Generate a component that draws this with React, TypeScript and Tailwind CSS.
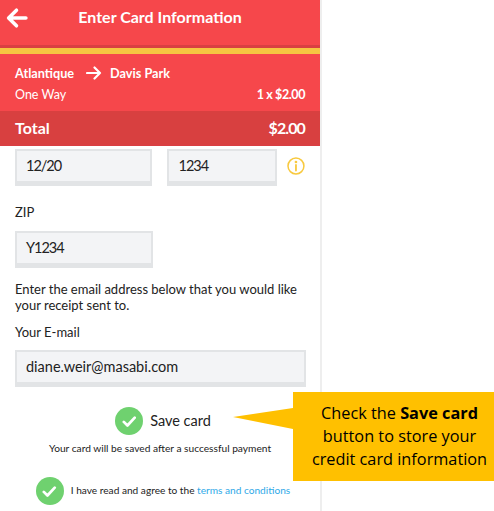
const font = { fontFamily: '"Lato", "Noto Sans", sans-serif' };

function Check({ size }: { size: number }) {
  return (
    <div className="flex shrink-0 items-center justify-center rounded-full bg-[#6fd16f]" style={{ width: size, height: size }}>
      <svg width={size * 0.52} height={size * 0.52} viewBox="0 0 24 24" fill="none" stroke="white" strokeWidth="4.5" strokeLinecap="round" strokeLinejoin="round">
        <path d="M3 13l6 6L21 6" />
      </svg>
    </div>
  );
}

function Field({ value, className }: { value: string; className: string }) {
  return (
    <div className={`flex h-[37px] items-center border-2 border-b-[5px] border-[#e2e4e6] bg-[#f3f4f6] pl-[9px] text-[#222] ${className}`}>
      {value}
    </div>
  );
}

export default function App() {
  return (
    <div className="relative h-[511px] w-[494px] overflow-hidden bg-white" style={font}>
      <div className="h-[511px] w-[322px] border-r-2 border-[#eeeeee]">
        <div className="relative flex h-[48px] items-start justify-center border-b-[3px] border-[#d93f42] bg-[#f6474b] pt-[5px] text-[16px] font-bold text-white">
          <svg className="absolute left-[6px] top-[7px]" width="22" height="22" viewBox="0 0 21 21" fill="none" stroke="white" strokeWidth="3.4" strokeLinecap="round" strokeLinejoin="round">
            <path d="M19 10.5H3M10 3l-7.5 7.5L10 18" />
          </svg>
          <span>Enter Card Information</span>
        </div>
        <div className="h-[6px] bg-[#f6c542]" />
        <div className="h-[57px] bg-[#f6474b] px-[15px] pt-[9px] text-white">
          <div className="flex items-center text-[12.7px] font-bold leading-[20px]">
            <span>Atlantique</span>
            <svg className="ml-[12px] mr-[8px]" width="16" height="14" viewBox="0 0 16 14" fill="none" stroke="white" strokeWidth="2.2" strokeLinecap="round" strokeLinejoin="round">
              <path d="M1 7h13M8.5 1.5L14 7l-5.5 5.5" />
            </svg>
            <span>Davis Park</span>
          </div>
          <div className="mt-[1px] flex justify-between text-[12.5px] leading-[21px]">
            <span>One Way</span>
            <span className="text-[12.5px] font-bold tracking-[-0.4px]">1 x $2.00</span>
          </div>
        </div>
        <div className="flex h-[35px] items-center justify-between border-b-2 border-[#d93f42] bg-[#d84040] px-[15px] text-[16px] font-bold text-white">
          <span>Total</span>
          <span className="tracking-[-0.9px]">$2.00</span>
        </div>
        <div className="px-[15px]">
          <div className="mt-[3px] flex items-center">
            <Field value="12/20" className="w-[138px] text-[14.5px] tracking-[-1px]" />
            <Field value="1234" className="ml-[15px] w-[110px] text-[14.5px] tracking-[-1px]" />
            <svg className="ml-[10px] -mt-[3px]" width="18" height="18" viewBox="0 0 18 18" fill="none" stroke="#f8c93e" strokeWidth="1.5" strokeLinecap="round">
              <circle cx="9" cy="9" r="8" />
              <path d="M9 8v5.5" strokeWidth="1.8" />
              <circle cx="9" cy="5" r="0.6" />
            </svg>
          </div>
          <div className="mt-[16px] text-[13px] leading-[20px] text-[#222]">ZIP</div>
          <Field value="Y1234" className="mt-[9px] w-[138px] text-[14.5px] tracking-[-1px]" />
          <p className="mt-[13px] text-[13px] leading-[16px] text-[#222]">Enter the email address below that you would like your receipt sent to.</p>
          <div className="mt-[11px] text-[13px] leading-[16px] text-[#222]">Your E-mail</div>
          <Field value="diane.weir@masabi.com" className="mt-[10px] w-[291px] text-[14.5px]" />
          <div className="mt-[20px] flex items-center justify-center pl-[6px]">
            <Check size={28} />
            <span className="ml-[7px] text-[14.5px] text-[#222]">Save card</span>
          </div>
          <div className="mt-[6px] text-center text-[10.2px] leading-[15px] text-[#222]">Your card will be saved after a successful payment</div>
          <div className="mt-[21px] flex items-center justify-center pl-[6px]">
            <Check size={28} />
            <span className="ml-[7px] text-[10.15px] text-[#222]">
              I have read and agree to the <span className="text-[#2fa9e8]">terms and conditions</span>
            </span>
          </div>
        </div>
      </div>
      <svg className="absolute left-[233px] top-[392px]" width="61" height="60" viewBox="0 0 61 60">
        <polygon points="0,25 60,16 60,37" fill="#ffc000" />
      </svg>
      <div
        className="absolute left-[293px] top-[392px] flex h-[89px] w-[201px] items-center justify-center bg-[#ffc000] pl-[12px] text-center text-[16.3px] leading-[23px] text-black"
        style={{ fontFamily: '"Open Sans", sans-serif' }}
      >
        <div className="whitespace-nowrap">
          Check the <b>Save card</b>
          <br />
          button to store your
          <br />
          credit card information
        </div>
      </div>
    </div>
  );
}
